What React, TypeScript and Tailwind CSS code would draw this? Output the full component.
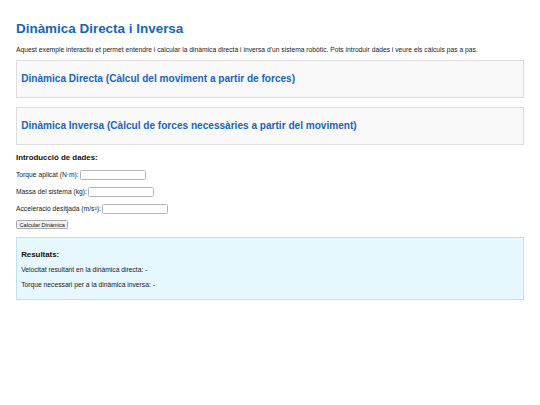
import React, { useState } from 'react';

const labelCls = "text-[6.72px] leading-[8px] text-[#222]";
const inputCls = "w-[66px] h-[9.5px] border border-[#b4b4b4] rounded-[1.5px] bg-white ml-[1.5px] outline-none text-[5.6px] px-[1px]";

export default function App() {
  const [torque, setTorque] = useState('');
  const [massa, setMassa] = useState('');
  const [acc, setAcc] = useState('');
  const [result, setResult] = useState<{ vel: string; tor: string }>({ vel: '-', tor: '-' });

  const calcular = () => {
    const t = parseFloat(torque);
    const m = parseFloat(massa);
    const a = parseFloat(acc);
    setResult({
      vel: !isNaN(t) && !isNaN(m) && m !== 0 ? (t / m).toFixed(2) + ' m/s' : '-',
      tor: !isNaN(m) && !isNaN(a) ? (m * a).toFixed(2) + ' N·m' : '-',
    });
  };

  return (
    <div className="min-h-screen bg-white px-[16px] pt-[21px] font-['Liberation_Sans',Arial,sans-serif]">
      <h1 className="text-[13.44px] leading-[16px] font-bold text-[#1565c0]">Dinàmica Directa i Inversa</h1>
      <p className="mt-[9px] text-[6.72px] leading-[8px] text-[#222]">
        Aquest exemple interactiu et permet entendre i calcular la dinàmica directa i inversa d'un sistema robòtic. Pots introduir dades i veure els càlculs pas a pas.
      </p>

      {/* Seccions */}
      <div className="mt-[6px] border border-[#dddddd] bg-[#f9f9f9] px-[4.2px]">
        <h2 className="py-[12px] text-[10.08px] leading-[12px] font-bold text-[#1565c0]">
          Dinàmica Directa (Càlcul del moviment a partir de forces)
        </h2>
      </div>
      <div className="mt-[9px] border border-[#dddddd] bg-[#f9f9f9] px-[4.2px]">
        <h2 className="py-[12px] text-[10.08px] leading-[12px] font-bold text-[#1565c0]">
          Dinàmica Inversa (Càlcul de forces necessàries a partir del moviment)
        </h2>
      </div>

      {/* Formulari */}
      <h3 className="mt-[7.5px] text-[7.86px] leading-[9px] font-bold text-[#111]">Introducció de dades:</h3>
      <div className="mt-[8.5px] flex flex-col gap-[7px]">
        <label className={`flex items-center h-[10px] ${labelCls}`}>
          Torque aplicat (N·m):
          <input className={inputCls} value={torque} onChange={e => setTorque(e.target.value)} />
        </label>
        <label className={`flex items-center h-[10px] ${labelCls}`}>
          Massa del sistema (kg):
          <input className={inputCls} value={massa} onChange={e => setMassa(e.target.value)} />
        </label>
        <label className={`flex items-center h-[10px] ${labelCls}`}>
          Acceleració desitjada (m/s²):
          <input className={inputCls} value={acc} onChange={e => setAcc(e.target.value)} />
        </label>
      </div>
      <button
        onClick={calcular}
        className="mt-[6px] h-[9px] px-[2.5px] flex items-center text-[5.6px] leading-[6px] text-[#111] bg-[#efefef] border border-[#a8a8a8] rounded-[1.5px]"
      >
        Calcular Dinàmica
      </button>

      {/* Resultats */}
      <div className="mt-[8px] border border-[#bfe0ec] bg-[#e6f7fd] px-[4.2px] pt-[11.5px] pb-[10px]">
        <h3 className="text-[7.86px] leading-[9px] font-bold text-[#111]">Resultats:</h3>
        <p className={`mt-[7.5px] ${labelCls}`}>Velocitat resultant en la dinàmica directa: {result.vel}</p>
        <p className={`mt-[7px] ${labelCls}`}>Torque necessari per a la dinàmica inversa: {result.tor}</p>
      </div>
    </div>
  );
}
